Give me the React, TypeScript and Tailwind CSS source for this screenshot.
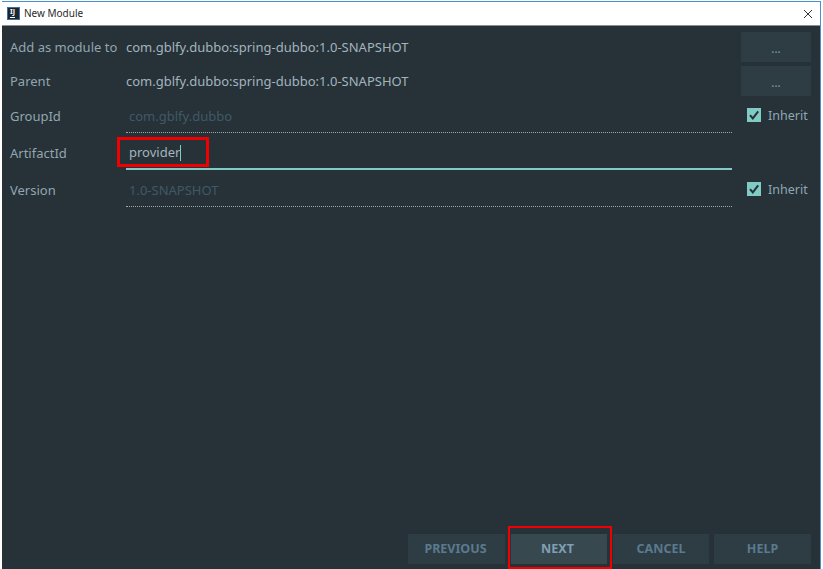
const labelClass = 'w-[116px] shrink-0 text-[13px] leading-[18px] text-[#93a5af]'

function BrowseButton() {
  return (
    <button className="w-[70px] h-[30px] ml-[9px] pt-[3px] shrink-0 bg-[#2e3c43] text-[#6f8a98] text-[11px] font-bold leading-none">
      ...
    </button>
  )
}

function Inherit() {
  return (
    <label className="flex items-center w-[70px] ml-[9px] pl-[6px] shrink-0 pb-[3px]">
      <span className="flex items-center justify-center w-[14px] h-[14px] bg-[#80cbc4]">
        <svg width="12" height="12" viewBox="0 0 12 12" fill="none">
          <path d="M2 6.2 L4.8 9.4 L10.2 2.4" stroke="#263238" strokeWidth="2" />
        </svg>
      </span>
      <span className="ml-[7px] pt-[2px] text-[12.5px] leading-[18px] text-[#8fa6b3]">Inherit</span>
    </label>
  )
}

function DisabledField({ label, value }: { label: string; value: string }) {
  return (
    <div className="flex items-center h-[33px]">
      <span className={labelClass + ' pb-[1px]'}>{label}</span>
      <div className="flex items-center w-[606px] h-[33px] pl-[3px] pt-[1px] border-b border-dotted border-[#9aa7ad] text-[13px] text-[#415967]">
        {value}
      </div>
      <Inherit />
    </div>
  )
}

function ReadonlyRow({ label }: { label: string }) {
  return (
    <div className="flex items-center h-[30px]">
      <span className={labelClass + ' pb-[1px]'}>{label}</span>
      <span className="w-[606px] text-[13px] leading-[18px] pb-[1px] text-[#a3b4bd]">com.gblfy.dubbo:spring-dubbo:1.0-SNAPSHOT</span>
      <BrowseButton />
    </div>
  )
}

function FooterButton({ children, className }: { children: string; className: string }) {
  return <button className={'h-[30px] text-[12.5px] font-bold ' + className}>{children}</button>
}

export default function App() {
  return (
    <div className="relative w-[823px] h-[569px] bg-white overflow-hidden font-['Noto_Sans','Open_Sans',sans-serif]">
      <div className="ml-[2px] mt-[1px] w-[819px] h-[568px] flex flex-col border-t border-r border-[#4a90d0]">
        <div className="flex items-center h-[23px] shrink-0 bg-white pl-[5px] pr-[7px]">
          <div className="relative w-[13px] h-[13px] bg-[#1c2530] border border-[#3f6f9f]">
            <span className="absolute left-[2px] top-[0px] text-[7px] leading-[8px] font-bold text-white">IJ</span>
            <span className="absolute left-[2px] bottom-[1px] w-[5px] h-[1px] bg-white" />
          </div>
          <span className="ml-[4px] text-[10px] text-[#2a2a2a]">New Module</span>
          <svg className="ml-auto" width="10" height="10" viewBox="0 0 10 10" fill="none">
            <path d="M1 1 L9 9 M9 1 L1 9" stroke="#333" strokeWidth="1" />
          </svg>
        </div>
        <div className="flex-1 flex flex-col justify-between bg-[#263238] border-t border-[#8a8f92] pl-[8px] pr-[9px] pt-[6px] pb-[5px]">
          <div className="flex flex-col gap-[4px]">
            <ReadonlyRow label="Add as module to" />
            <ReadonlyRow label="Parent" />
            <DisabledField label="GroupId" value="com.gblfy.dubbo" />
            <div className="flex items-center h-[33px]">
              <span className={labelClass + ' pb-[1px]'}>ArtifactId</span>
              <div className="flex items-center w-[606px] h-[33px] pl-[3px] border-b-2 border-[#80cbc4] text-[13px] text-[#a3b4bd]">
                provider
                <span className="w-[1px] h-[16px] bg-[#80cbc4]" />
              </div>
            </div>
            <DisabledField label="Version" value="1.0-SNAPSHOT" />
          </div>
          <div className="flex justify-end">
            <FooterButton className="w-[97px] pr-[2px] bg-[#2e3c43] text-[#5b7a8d]">PREVIOUS</FooterButton>
            <FooterButton className="w-[96px] ml-[6px] pr-[3px] bg-[#37484f] text-[#7f9fb3]">NEXT</FooterButton>
            <FooterButton className="w-[96px] ml-[6px] bg-[#2e3c43] text-[#5b7a8d]">CANCEL</FooterButton>
            <FooterButton className="w-[97px] ml-[5px] bg-[#2e3c43] text-[#5b7a8d]">HELP</FooterButton>
          </div>
        </div>
      </div>
      <div className="absolute left-[117px] top-[137px] w-[92px] h-[30px] border-[3px] border-[#f00000]" />
      <div className="absolute left-[508px] top-[526px] w-[104px] h-[43px] border-2 border-[#f00000]" />
    </div>
  )
}
